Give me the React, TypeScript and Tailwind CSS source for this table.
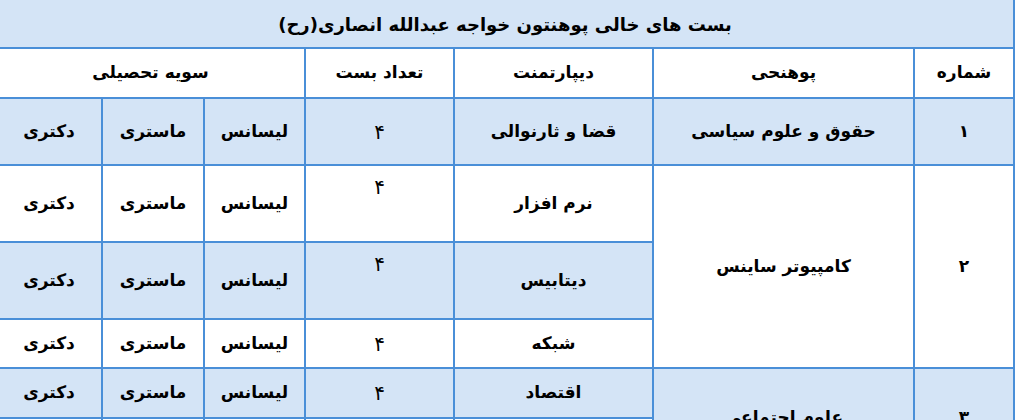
const levels = ["لیسانس", "ماستری", "دکتری"];

const Cell = ({
  children,
  className = "",
  rowSpan,
  colSpan,
}: {
  children?: React.ReactNode;
  className?: string;
  rowSpan?: number;
  colSpan?: number;
}) => (
  <td rowSpan={rowSpan} colSpan={colSpan} className={`border-2 border-[#4a8fd8] text-center align-middle ${className}`}>
    {children}
  </td>
);

const LevelCells = () => (
  <>
    {levels.map((l) => (
      <Cell key={l} className="font-bold">
        {l}
      </Cell>
    ))}
  </>
);

const Count = ({ top = false }: { top?: boolean }) => (
  <Cell className={`text-[20px] ${top ? "align-top pt-[6px]" : ""}`}>۴</Cell>
);

const App = () => {
  return (
    <div className="w-[1015px] h-[420px] overflow-hidden bg-white font-['DejaVu_Sans',sans-serif] text-[17px] text-black">
      <table dir="rtl" className="border-collapse table-fixed w-[1018px] -ml-[5px] -mt-[3px]">
        <colgroup>
          <col className="w-[100px]" />
          <col className="w-[261px]" />
          <col className="w-[199px]" />
          <col className="w-[149px]" />
          <col className="w-[101px]" />
          <col className="w-[102px]" />
          <col className="w-[106px]" />
        </colgroup>
        <tbody>
          {/* Title */}
          <tr className="h-[50px] bg-[#d4e4f6]">
            <td colSpan={7} className="border-2 border-[#4a8fd8] pt-[2px] text-center font-bold text-[18px]">
              بست های خالی پوهنتون خواجه عبدالله انصاری(رح)
            </td>
          </tr>

          {/* Header */}
          <tr className="h-[50px] bg-white font-bold">
            <Cell>شماره</Cell>
            <Cell>پوهنحی</Cell>
            <Cell>دیپارتمنت</Cell>
            <Cell>تعداد بست</Cell>
            <Cell colSpan={3}>سویه تحصیلی</Cell>
          </tr>

          {/* Row 1 */}
          <tr className="h-[67px] bg-[#d4e4f6]">
            <Cell className="font-bold">۱</Cell>
            <Cell className="font-bold">حقوق و علوم سیاسی</Cell>
            <Cell className="font-bold">قضا و ثارنوالی</Cell>
            <Count />
            <LevelCells />
          </tr>

          {/* Computer science */}
          <tr className="h-[77px] bg-white">
            <Cell rowSpan={3} className="font-bold bg-white">
              ۲
            </Cell>
            <Cell rowSpan={3} className="font-bold bg-white">
              کامپیوتر ساینس
            </Cell>
            <Cell className="font-bold">نرم افزار</Cell>
            <Count top />
            <LevelCells />
          </tr>
          <tr className="h-[77px] bg-[#d4e4f6]">
            <Cell className="font-bold">دیتابیس</Cell>
            <Count top />
            <LevelCells />
          </tr>
          <tr className="h-[49px] bg-white">
            <Cell className="font-bold">شبکه</Cell>
            <Count />
            <LevelCells />
          </tr>

          {/* Social sciences */}
          <tr className="h-[50px] bg-[#d4e4f6]">
            <Cell rowSpan={2} className="font-bold">
              ۳
            </Cell>
            <Cell rowSpan={2} className="font-bold">
              علوم اجتماعی
            </Cell>
            <Cell className="font-bold">اقتصاد</Cell>
            <Count />
            <LevelCells />
          </tr>
          <tr className="h-[50px] bg-white">
            <Cell className="font-bold">جامعه شناسی</Cell>
            <Count />
            <LevelCells />
          </tr>
        </tbody>
      </table>
    </div>
  );
};

export default App;
